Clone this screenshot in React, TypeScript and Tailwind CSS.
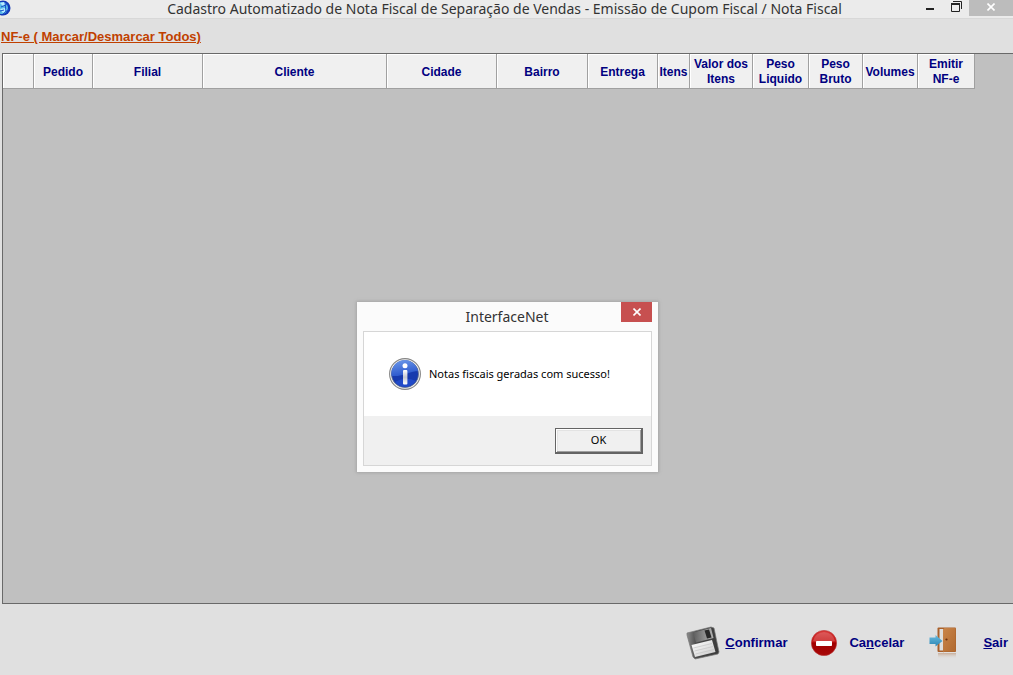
import { useState } from "react";

const columns = [
  { label: "", width: "w-[31px]" },
  { label: "Pedido", width: "w-[59px]" },
  { label: "Filial", width: "w-[110px]" },
  { label: "Cliente", width: "w-[184px]" },
  { label: "Cidade", width: "w-[110px]" },
  { label: "Bairro", width: "w-[91px]" },
  { label: "Entrega", width: "w-[70px]" },
  { label: "Itens", width: "w-[32px]" },
  { label: "Valor dos Itens", width: "w-[63px]" },
  { label: "Peso Liquido", width: "w-[56px]" },
  { label: "Peso Bruto", width: "w-[54px]" },
  { label: "Volumes", width: "w-[55px]" },
  { label: "Emitir NF-e", width: "w-[57px]" },
];

function AppIcon() {
  return (
    <svg className="h-4 w-3 shrink-0" viewBox="0 0 12 16" aria-hidden="true">
      <circle cx="3" cy="8" r="7.5" fill="#1238b8" />
      <circle cx="2" cy="8" r="6" fill="#58b8e8" />
      <path d="M0 3 L4 2 L7 5 L3 6 Z M0 9 L5 8 L7 10 L3 13 Z" fill="#b8ecff" />
      <path d="M1 7 L8 4 M3 14 L9 9 M0 11 L4 10 M5 2 L6 12" stroke="#1650c8" strokeWidth="1" fill="none" />
    </svg>
  );
}

function CloseMark() {
  return (
    <svg className="h-2 w-2" viewBox="0 0 8 8" aria-hidden="true">
      <path d="M0.5 0.5 L7.5 7.5 M7.5 0.5 L0.5 7.5" stroke="#fff" strokeWidth="1.6" />
    </svg>
  );
}

function InfoIcon() {
  return (
    <svg className="h-8 w-8 shrink-0" viewBox="0 0 32 32" aria-hidden="true">
      <defs>
        <linearGradient id="info-top" x1="0" y1="0" x2="0.3" y2="1">
          <stop offset="0" stopColor="#6f9cec" />
          <stop offset="1" stopColor="#2b57cc" />
        </linearGradient>
        <linearGradient id="info-stem" x1="0" y1="0" x2="0" y2="1">
          <stop offset="0" stopColor="#fff" />
          <stop offset="0.5" stopColor="#c4c8d2" />
          <stop offset="1" stopColor="#fff" />
        </linearGradient>
      </defs>
      <circle cx="16" cy="16" r="15.4" fill="#f4f4f4" stroke="#858585" strokeWidth="1.1" />
      <circle cx="16" cy="16" r="13.6" fill="#173aae" stroke="#667184" strokeWidth="0.7" />
      <path d="M2.6 18 A13.4 13.4 0 0 1 29 13 C22 13 14 19 2.6 18 Z" fill="url(#info-top)" />
      <path d="M6 24 Q16 18 27 23 Q22 29 16 29 Q10 29 6 24 Z" fill="#2855d8" opacity="0.6" />
      <circle cx="16" cy="7.8" r="2.5" fill="#fff" />
      <rect x="14" y="12" width="4.4" height="14.4" rx="1" fill="url(#info-stem)" />
    </svg>
  );
}

function SaveIcon() {
  return (
    <svg className="h-9 w-9 shrink-0" viewBox="0 0 36 36" aria-hidden="true">
      <defs>
        <linearGradient id="disk-body" x1="0" y1="0" x2="1" y2="0">
          <stop offset="0" stopColor="#8c8c8c" />
          <stop offset="0.3" stopColor="#4a4a4a" />
          <stop offset="1" stopColor="#3b3b3b" />
        </linearGradient>
        <linearGradient id="disk-metal" x1="0" y1="0" x2="1" y2="0">
          <stop offset="0" stopColor="#5d5d5d" />
          <stop offset="1" stopColor="#b4b4b4" />
        </linearGradient>
        <linearGradient id="disk-label" x1="0" y1="0" x2="1" y2="1">
          <stop offset="0" stopColor="#fff" />
          <stop offset="1" stopColor="#c9c9c9" />
        </linearGradient>
      </defs>
      <path d="M2 8 L26 2 L29 3 L34 27 L33 29 L10 34 L8 32 L2 10 Z" fill="url(#disk-body)" stroke="#777" strokeWidth="0.7" />
      <path d="M8 7.5 L26 3 L28.5 13 L11 17.5 Z" fill="url(#disk-metal)" />
      <path d="M19.5 5.5 L24 4.5 L26.5 12.5 L22 13.5 Z" fill="#292929" />
      <path d="M6.5 20 L27 15 L30.5 27 L10 32 Z" fill="url(#disk-label)" />
      <path d="M8.5 23 L27 18.5 M9.5 26 L28 21.5 M10.5 29 L29 24.5" stroke="#c4c4c4" strokeWidth="0.7" />
    </svg>
  );
}

function CancelIcon() {
  return (
    <svg className="h-[26px] w-[26px] shrink-0" viewBox="0 0 26 26" aria-hidden="true">
      <defs>
        <linearGradient id="stop-red" x1="0" y1="0" x2="0" y2="1">
          <stop offset="0" stopColor="#d83a3a" />
          <stop offset="0.45" stopColor="#c41414" />
          <stop offset="0.5" stopColor="#a00000" />
          <stop offset="1" stopColor="#a80808" />
        </linearGradient>
      </defs>
      <circle cx="13" cy="13" r="12.6" fill="url(#stop-red)" stroke="#b93030" strokeWidth="0.6" />
      <path d="M2 11 A11.2 11.2 0 0 1 24 11 Q13 14 2 11 Z" fill="#fff" opacity="0.18" />
      <rect x="5" y="11" width="16" height="5" rx="0.8" fill="#fff" />
    </svg>
  );
}

function ExitIcon() {
  return (
    <svg className="h-8 w-7 shrink-0" viewBox="0 0 28 32" aria-hidden="true">
      <defs>
        <linearGradient id="door" x1="0" y1="0" x2="1" y2="1">
          <stop offset="0" stopColor="#c9854a" />
          <stop offset="1" stopColor="#b0692f" />
        </linearGradient>
        <linearGradient id="door-shadow" x1="0" y1="0" x2="0" y2="1">
          <stop offset="0" stopColor="#b98a68" stopOpacity="0.6" />
          <stop offset="1" stopColor="#e0e0e0" stopOpacity="0" />
        </linearGradient>
        <linearGradient id="arrow" x1="0" y1="0" x2="0" y2="1">
          <stop offset="0" stopColor="#6abce0" />
          <stop offset="1" stopColor="#2c86b4" />
        </linearGradient>
      </defs>
      <rect x="9" y="26" width="18" height="6" fill="url(#door-shadow)" />
      <rect x="8.5" y="0.5" width="18.5" height="24.5" rx="1" fill="#a9602a" />
      <path d="M10.5 2 H14.5 V23.5 H10.5 Z" fill="#dedede" />
      <path d="M14 2.5 L15.5 1 H26.5 V24.5 H15.5 L14 25.5 Z" fill="url(#door)" />
      <circle cx="17.5" cy="12.5" r="1.1" fill="#6b3010" />
      <path d="M0.5 10.5 H6.5 V8 L13.5 14 L6.5 19.5 V17 H0.5 Z" fill="url(#arrow)" />
    </svg>
  );
}

function TitleBar() {
  return (
    <header className="flex h-[19px] items-start border-b border-[#d8d8d8] bg-[#ebebeb]">
      <AppIcon />
      <h1 className="flex-1 pl-20 text-center font-['Noto_Sans',sans-serif] text-[14px] leading-[17px] whitespace-nowrap text-[#333]">
        Cadastro Automatizado de Nota Fiscal de Separação de Vendas - Emissão de Cupom Fiscal / Nota Fiscal
      </h1>
      <div className="flex h-4 shrink-0">
        <button aria-label="Minimizar" className="flex w-[26px] items-end justify-center pb-[6px]">
          <span className="h-[2px] w-2 bg-[#222]" />
        </button>
        <button aria-label="Restaurar" className="flex w-[26px] items-start justify-center pt-[1px]">
          <svg className="h-[11px] w-[11px]" viewBox="0 0 11 11" aria-hidden="true">
            <path d="M2 0.5 H10.5 V8 M0.5 2 V10.5 H8.5 V2" fill="none" stroke="#222" />
            <path d="M0 3 H9" stroke="#222" strokeWidth="2" />
          </svg>
        </button>
        <button aria-label="Fechar" className="flex w-11 items-center justify-center bg-[#bcbcbc] pb-[2px]">
          <CloseMark />
        </button>
      </div>
    </header>
  );
}

function OrdersGrid() {
  return (
    <main className="ml-[2px] flex-1 border-y border-l border-[#696969] bg-[#c0c0c0]">
      <table className="table-fixed border-separate border-spacing-0">
        <thead>
          <tr className="h-[35px]">
            {columns.map((col, i) => (
              <th
                key={i}
                className={`${col.width} border-r border-b border-r-[#a0a0a0] border-b-[#a0a0a0] bg-[#f0f0f0] p-0 pt-[2px] text-center text-[12px] leading-[15px] font-bold text-[#000080] shadow-[inset_1px_1px_0_#fff]`}
              >
                {col.label}
              </th>
            ))}
          </tr>
        </thead>
      </table>
    </main>
  );
}

function MessageDialog({ onClose }: { onClose: () => void }) {
  return (
    <div
      role="dialog"
      aria-labelledby="dialog-title"
      className="absolute top-[302px] left-[357px] w-[301px] bg-[#fbfbfb] px-[6px] pb-[6px] font-['Noto_Sans',sans-serif] shadow-[0_0_3px_1px_#a6a6a6]"
    >
      <div className="flex h-[29px] items-start">
        <h2 id="dialog-title" className="flex-1 pl-[30px] text-center text-[14px] leading-[29px] text-[#333]">
          InterfaceNet
        </h2>
        <button aria-label="Fechar mensagem" onClick={onClose} className="flex h-5 w-[31px] items-center justify-center bg-[#c75050]">
          <CloseMark />
        </button>
      </div>
      <div className="border border-[#d6d6d6] bg-white">
        <div className="flex h-[84px] items-center gap-2 pl-[25px]">
          <InfoIcon />
          <p className="text-[11px] whitespace-nowrap text-black">Notas fiscais geradas com sucesso!</p>
        </div>
        <div className="flex h-[49px] items-center justify-end bg-[#f0f0f0] pr-2">
          <button
            onClick={onClose}
            className="h-[26px] w-[88px] border border-r-2 border-b-2 border-[#646464] text-[11px] text-black shadow-[inset_1px_1px_0_#fff,inset_-1px_-1px_0_#a0a0a0,inset_2px_2px_0_#e3e3e3]"
          >
            OK
          </button>
        </div>
      </div>
    </div>
  );
}

export default function App() {
  const [open, setOpen] = useState(true);

  return (
    <div className="relative flex min-h-screen flex-col overflow-hidden bg-[#e0e0e0] font-['Liberation_Sans',Arial,sans-serif]">
      <TitleBar />
      <div className="h-[34px] px-px pt-[9px] text-[13px] leading-[17px] font-bold">
        <a href="#todos" className="text-[#c04000] underline">
          NF-e ( Marcar/Desmarcar Todos)
        </a>
      </div>
      <OrdersGrid />
      <footer className="flex h-[71px] items-center justify-end pr-[5px] text-[13px] font-bold text-[#000080]">
        <button className="flex items-center gap-1 pt-[6px]">
          <SaveIcon />
          <span>
            <u>C</u>onfirmar
          </span>
        </button>
        <button className="ml-6 flex items-center gap-3 pt-[6px]">
          <CancelIcon />
          <span>
            Ca<u>n</u>celar
          </span>
        </button>
        <button className="ml-[25px] flex items-center gap-[26px] pt-[6px]">
          <ExitIcon />
          <span>
            <u>S</u>air
          </span>
        </button>
      </footer>
      {open && <MessageDialog onClose={() => setOpen(false)} />}
    </div>
  );
}
